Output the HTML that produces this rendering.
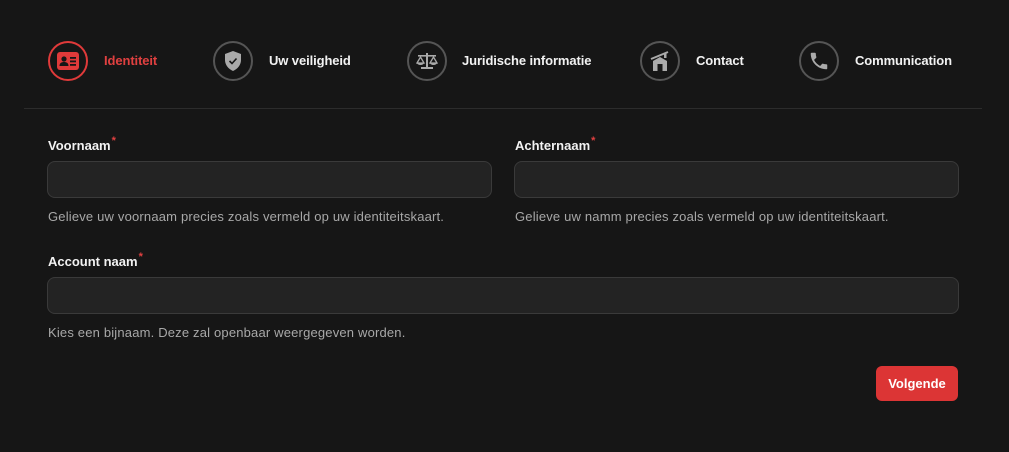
<!DOCTYPE html>
<html><head><style>
body{margin:0;background:#161616;font-family:"Liberation Sans",sans-serif;width:1009px;height:452px;overflow:hidden;position:relative}
.a{position:absolute}
.c{position:absolute;width:36px;height:36px;border:2px solid #555;border-radius:50%;top:41px;display:flex;align-items:center;justify-content:center}
.s{position:absolute;top:53px;font-size:13px;font-weight:bold;color:#f2f2f2;letter-spacing:-0.1px}
.l{position:absolute;font-size:13px;font-weight:bold;color:#f2f2f2}
.l i{color:#e04040;font-style:normal;font-size:11px;position:relative;top:-6px;margin-left:1px}
.in{position:absolute;height:35px;background:#232323;border:1px solid #3a3a3a;border-radius:8px}
.h{position:absolute;font-size:13px;color:#a8a8a8;letter-spacing:0.18px}
</style></head><body>
<div class="c" style="left:48px;border-color:#e03a3a"><svg width="22" height="18" viewBox="0 0 22 18"><rect x="0" y="0" width="22" height="18" rx="3" fill="#e03a3a"/><circle cx="7" cy="7" r="2.6" fill="#161616"/><path d="M2.5 14c0-3 2-4 4.5-4s4.5 1 4.5 4z" fill="#161616"/><rect x="13" y="5" width="6" height="1.8" fill="#161616"/><rect x="13" y="8.5" width="6" height="1.8" fill="#161616"/><rect x="13" y="12" width="6" height="1.8" fill="#161616"/></svg></div>
<div class="s" style="left:104px;color:#e04040">Identiteit</div>
<div class="c" style="left:213px"><svg width="18" height="20" viewBox="0 0 18 20"><path d="M9 0L17 3v6c0 5-3.5 9-8 11C4.5 18 1 14 1 9V3z" fill="#aaa"/><path d="M5.5 10l2.5 2.5 4.5-5" stroke="#161616" stroke-width="1.6" fill="none"/></svg></div>
<div class="s" style="left:269px">Uw veiligheid</div>
<div class="c" style="left:407px"><svg width="22" height="18" viewBox="0 0 22 18"><rect x="10" y="1" width="2" height="14" fill="#aaa"/><rect x="2" y="3" width="18" height="1.6" fill="#aaa"/><rect x="5" y="15" width="12" height="2" fill="#aaa"/><path d="M1 11l3.5-6 3.5 6zM14 11l3.5-6 3.5 6z" fill="none" stroke="#aaa" stroke-width="1.3"/><path d="M1 11h7a3.5 2 0 0 1-7 0zM14 11h7a3.5 2 0 0 1-7 0z" fill="#aaa"/></svg></div>
<div class="s" style="left:462px">Juridische informatie</div>
<div class="c" style="left:640px"><svg width="22" height="22" viewBox="0 0 22 22"><path d="M2 9L19 2" stroke="#aaa" stroke-width="2"/><path d="M4 11l7-4 7 4v10H4z" fill="#aaa"/><rect x="8.5" y="14" width="5" height="7" fill="#161616"/><rect x="15" y="3" width="2.5" height="5" fill="#aaa"/></svg></div>
<div class="s" style="left:696px">Contact</div>
<div class="c" style="left:799px"><svg width="22" height="22" viewBox="0 0 24 24"><path d="M6.6 10.8c1.4 2.8 3.8 5.1 6.6 6.6l2.2-2.2c.3-.3.7-.4 1-.2 1.1.4 2.3.6 3.6.6.6 0 1 .4 1 1V20c0 .6-.4 1-1 1C10.6 21 3 13.4 3 4c0-.6.4-1 1-1h3.5c.6 0 1 .4 1 1 0 1.3.2 2.5.6 3.6.1.3 0 .7-.2 1z" fill="#aaa"/></svg></div>
<div class="s" style="left:855px">Communication</div>
<div class="a" style="left:24px;top:108px;width:958px;height:1px;background:#2c2c2c"></div>
<div class="l" style="left:48px;top:138px">Voornaam<i>*</i></div>
<div class="l" style="left:515px;top:138px">Achternaam<i>*</i></div>
<div class="in" style="left:47px;top:161px;width:443px"></div>
<div class="in" style="left:514px;top:161px;width:443px"></div>
<div class="h" style="left:48px;top:209px">Gelieve uw voornaam precies zoals vermeld op uw identiteitskaart.</div>
<div class="h" style="left:515px;top:209px">Gelieve uw namm precies zoals vermeld op uw identiteitskaart.</div>
<div class="l" style="left:48px;top:254px">Account naam<i>*</i></div>
<div class="in" style="left:47px;top:277px;width:910px"></div>
<div class="h" style="left:48px;top:325px">Kies een bijnaam. Deze zal openbaar weergegeven worden.</div>
<div class="a" style="left:876px;top:366px;width:82px;height:35px;background:#dc3535;border-radius:6px;color:#fff;font-size:13px;font-weight:bold;display:flex;align-items:center;justify-content:center">Volgende</div>
</body></html>
